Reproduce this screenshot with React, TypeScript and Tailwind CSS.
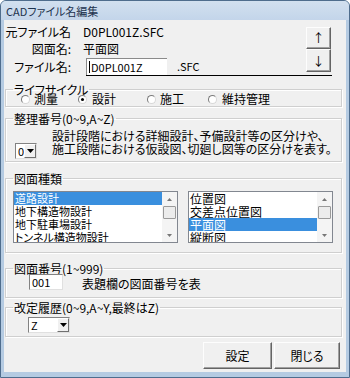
import React from "react";

const F = "font-['Noto_Sans_CJK_JP','Noto_Sans',sans-serif] [font-feature-settings:'palt']";

function Tri() {
  return (
    <svg width="7" height="4" viewBox="0 0 7 4">
      <polygon points="0,0 7,0 3.5,4" fill="#000" />
    </svg>
  );
}

function Scrollbar() {
  return (
    <div className="w-[15px] h-full flex flex-col bg-[#f4f4f4]">
      <div className="h-[14px] flex items-center justify-center">
        <svg width="5" height="3" viewBox="0 0 5 3"><polygon points="0,3 5,3 2.5,0" fill="#777" /></svg>
      </div>
      <div className="h-[13px] mx-[1px] border border-[#9a9a9a] bg-[#ececec] rounded-[1px]" />
      <div className="flex-1" />
      <div className="h-[14px] flex items-center justify-center">
        <svg width="5" height="3" viewBox="0 0 5 3"><polygon points="0,0 5,0 2.5,3" fill="#777" /></svg>
      </div>
    </div>
  );
}

function ListBox({ items, sel, width, size }: { items: string[]; sel: number; width: string; size: string }) {
  return (
    <div className={`${width} h-[52px] flex bg-white border border-[#828790]`}>
      <div className={`flex-1 overflow-hidden flex flex-col ${size} leading-[13px]`}>
        {items.map((t, i) => (
          <div key={t} className={`h-[13px] pl-[1px] shrink-0 whitespace-nowrap ${i === sel ? "bg-[#3a8fde] text-white" : "text-black"}`}>
            {t}
          </div>
        ))}
      </div>
      <Scrollbar />
    </div>
  );
}

function Select({ value, width }: { value: string; width: string }) {
  return (
    <div className={`${width} h-[16px] flex bg-white border border-t-[#828282] border-l-[#828282] border-b-[#e0e0e0] border-r-[#e0e0e0]`}>
      <div className="flex-1 flex items-center pl-[2px] text-[11px]">{value}</div>
      <div className="w-[12px] h-full flex items-center justify-center bg-[#f0f0f0] border border-t-white border-l-white border-b-[#707070] border-r-[#707070]">
        <Tri />
      </div>
    </div>
  );
}

function Radio({ checked }: { checked?: boolean }) {
  return (
    <div className="w-[9px] h-[9px] rounded-full bg-white border border-t-[#7a7a7a] border-l-[#7a7a7a] border-b-[#d8d8d8] border-r-[#d8d8d8] flex items-center justify-center">
      {checked && <div className="w-[3px] h-[3px] rounded-full bg-black" />}
    </div>
  );
}

function Group({ label, className, children }: { label: string; className?: string; children: React.ReactNode }) {
  return (
    <fieldset className={`border border-[#cfcfcf] shadow-[inset_1px_1px_0_#ffffff,1px_1px_0_#ffffff] ${className ?? ""}`}>
      <legend className="ml-[7px] px-[1px] leading-[13px] text-[12px]">{label}</legend>
      {children}
    </fieldset>
  );
}

function Btn({ children, className }: { children: React.ReactNode; className?: string }) {
  return (
    <div className={`flex items-center justify-center bg-[#f0f0f0] border border-t-[#fdfdfd] border-l-[#fdfdfd] border-b-[#646464] border-r-[#646464] shadow-[inset_-1px_-1px_0_#a0a0a0] ${className ?? ""}`}>
      {children}
    </div>
  );
}

export default function App() {
  return (
    <div className={`w-[350px] h-[378px] flex flex-col bg-[#b5cbe2] border border-[#4f6d8d] rounded-t-[6px] overflow-hidden text-[12px] text-black leading-none ${F}`}>
      <div className="h-[19px] shrink-0 flex items-center pl-[5px] pt-[1px] text-[11px] text-[#1c324d] bg-gradient-to-b from-[#d2e0ef] to-[#c3d5ea]">
        CADファイル名編集
      </div>
      <div className="flex-1 mx-[3px] mb-[5px] bg-[#f0f0f0] flex flex-col pl-[1px] pr-[4px]">
        {/* top */}
        <div className="h-[60px] shrink-0 flex">
          <div className="w-[300px] flex flex-col pt-[4px]">
            <div className="h-[16px] flex items-center">
              <div className="w-[66px] text-right">元ファイル名</div>
              <div className="ml-[12px]">D0PL001Z.SFC</div>
            </div>
            <div className="h-[16px] mt-[1px] flex items-center">
              <div className="w-[66px] text-right">図面名:</div>
              <div className="ml-[12px]">平面図</div>
            </div>
            <div className="h-[18px] mt-[1px] flex items-center">
              <div className="w-[66px] text-right">ファイル名:</div>
              <div className="ml-[15px] flex-1 h-[18px] flex items-end border-b border-black">
                <div className="w-[81px] h-[17px] bg-white border-l border-t border-[#8a8a8a] flex items-center pl-[2px]">
                  <span className="w-[1px] h-[12px] bg-black mr-[1px]" />
                  <span className="text-[11px]">D0PL001Z</span>
                </div>
                <span className="ml-[10px] mb-[3px] text-[11px]">.SFC</span>
              </div>
            </div>
          </div>
          <div className="flex flex-col">
            <div className="mt-[7px] ml-[1px] flex flex-col">
              <Btn className="w-[25px] h-[22px] text-[12px]">↑</Btn>
              <Btn className="w-[25px] h-[23px] text-[12px]">↓</Btn>
            </div>
            <div className="mt-[3px] w-[27px] h-[1px] bg-black" />
          </div>
        </div>

        <Group label="ライフサイクル" className="mt-[3px]">
          <div className="h-[12px] -mt-[3px] mb-[1px] flex items-center pl-[15px]">
            <div className="w-[57px] flex items-center gap-[4px]"><Radio /><span>測量</span></div>
            <div className="w-[69px] flex items-center gap-[5px]"><Radio checked /><span>設計</span></div>
            <div className="w-[61px] flex items-center gap-[4px]"><Radio /><span>施工</span></div>
            <div className="flex items-center gap-[5px]"><Radio /><span>維持管理</span></div>
          </div>
        </Group>

        <Group label="整理番号(0~9,A~Z)" className="mt-[5px]">
          <div className="flex items-start pt-[4px] pb-[2px] pl-[9px]">
            <div className="mt-[14px]"><Select value="0" width="w-[22px]" /></div>
            <div className="ml-[15px] leading-[13px] text-[12px]">
              <div>設計段階における詳細設計、予備設計等の区分けや、</div>
              <div>施工段階における仮設図、切廻し図等の区分けを表す。</div>
            </div>
          </div>
        </Group>

        <Group label="図面種類" className="mt-[10px]">
          <div className="flex gap-[10px] pl-[7px] mt-[6px] pb-[9px]">
            <ListBox
              width="w-[165px]"
              size="text-[11px]"
              sel={0}
              items={["道路設計", "地下構造物設計", "地下駐車場設計", "トンネル構造物設計"]}
            />
            <ListBox width="w-[145px]" size="text-[12px]" sel={2} items={["位置図", "交差点位置図", "平面図", "縦断図"]} />
          </div>
        </Group>

        <Group label="図面番号(1~999)" className="mt-[9px]">
          <div className="flex items-center -mt-[1px] pb-[7px] pl-[23px]">
            <div className="w-[34px] h-[16px] bg-white border border-t-[#828282] border-l-[#828282] border-b-[#e0e0e0] border-r-[#e0e0e0] flex items-center pl-[2px] text-[11px]">
              001
            </div>
            <div className="ml-[19px] mt-[3px]">表題欄の図面番号を表</div>
          </div>
        </Group>

        <Group label="改定履歴(0~9,A~Y,最終はZ)" className="mt-[3px]">
          <div className="pl-[22px] mt-[3px] pb-[3px]">
            <Select value="Z" width="w-[42px]" />
          </div>
        </Group>

        <div className="mt-[5px] flex justify-end gap-[2px] pr-[2px]">
          <Btn className="w-[69px] h-[27px]">設定</Btn>
          <Btn className="w-[66px] h-[27px]">閉じる</Btn>
        </div>
      </div>
    </div>
  );
}
